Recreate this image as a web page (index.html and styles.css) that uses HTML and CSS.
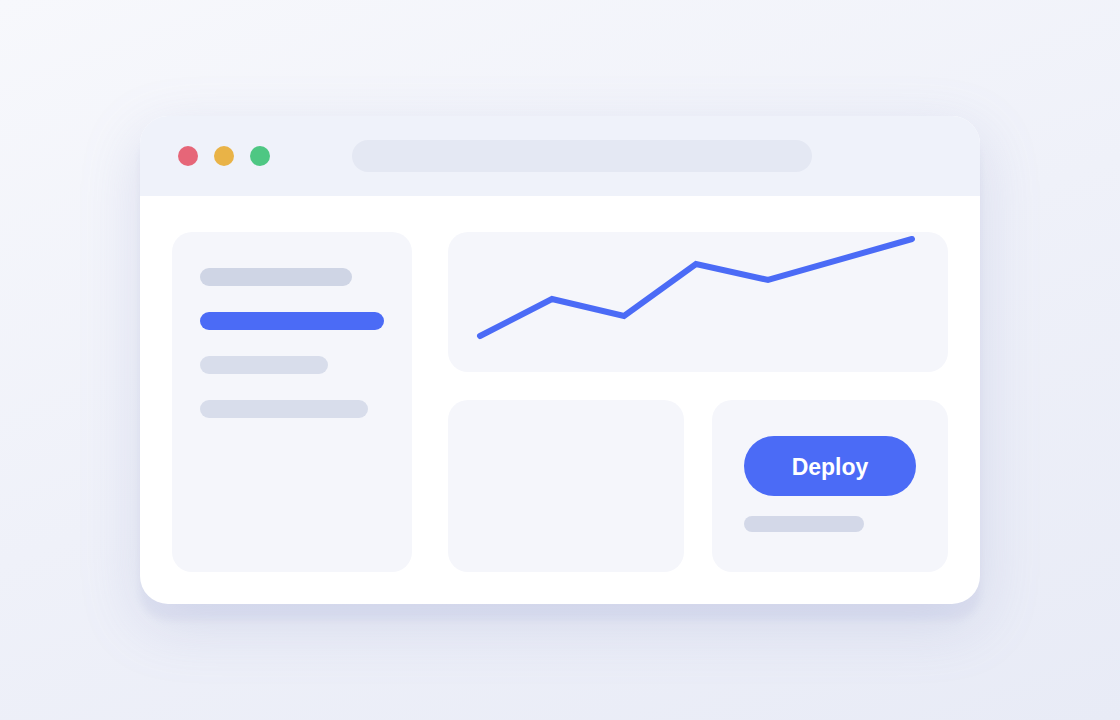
FILE: index.html
```html
<!DOCTYPE html>
<html>
<head>
<meta charset="utf-8">
<link rel="stylesheet" href="styles.css">
</head>
<body>
<div class="stage">
  <div class="window">
    <div class="titlebar">
      <div class="dots">
        <span class="dot red"></span>
        <span class="dot yellow"></span>
        <span class="dot green"></span>
      </div>
      <div class="url"></div>
    </div>
    <div class="content">
      <div class="card sidebar">
        <div class="line l1"></div>
        <div class="line l2"></div>
        <div class="line l3"></div>
        <div class="line l4"></div>
      </div>
      <div class="main">
        <div class="card chart">
          <svg width="500" height="140" viewBox="0 0 500 140">
            <polyline points="32,104 104,67 176,84 248,32 320,48 464,7" fill="none" stroke="#4b6bf6" stroke-width="6" stroke-linecap="round" stroke-linejoin="miter"/>
          </svg>
        </div>
        <div class="row">
          <div class="card box"></div>
          <div class="card box action">
            <button class="deploy">Deploy</button>
            <div class="line sub"></div>
          </div>
        </div>
      </div>
    </div>
  </div>
</div>
</body>
</html>
```

FILE: styles.css
```css
html, body {
  margin: 0;
  padding: 0;
}
body {
  width: 1120px;
  height: 720px;
  overflow: hidden;
  background: linear-gradient(160deg, #f7f8fc 0%, #eff1f9 50%, #e8ebf6 100%);
  font-family: "Liberation Sans", Arial, sans-serif;
}
.stage {
  width: 1120px;
  height: 720px;
  display: flex;
  align-items: center;
  justify-content: center;
}
.window {
  width: 840px;
  height: 488px;
  background: #ffffff;
  border-radius: 28px;
  overflow: hidden;
  box-shadow: 0 16px 6px rgba(175, 182, 218, 0.16), 0 20px 60px rgba(130, 140, 195, 0.22);
  display: flex;
  flex-direction: column;
}
.titlebar {
  height: 80px;
  background: #eff2fa;
  display: flex;
  align-items: center;
  padding-left: 38px;
  box-sizing: border-box;
}
.dots {
  display: flex;
  gap: 16px;
}
.dot {
  width: 20px;
  height: 20px;
  border-radius: 50%;
  display: block;
}
.red { background: #e66678; }
.yellow { background: #e9b347; }
.green { background: #4ec783; }
.url {
  margin-left: 82px;
  width: 460px;
  height: 32px;
  border-radius: 16px;
  background: #e4e8f3;
}
.content {
  flex: 1;
  display: flex;
  gap: 36px;
  padding: 36px 32px 32px;
}
.card {
  background: #f5f6fb;
  border-radius: 20px;
}
.sidebar {
  width: 240px;
  height: 340px;
  box-sizing: border-box;
  padding: 36px 28px;
  display: flex;
  flex-direction: column;
  gap: 26px;
}
.line {
  height: 18px;
  border-radius: 9px;
  background: #d8ddeb;
}
.l1 { width: 152px; background: #cfd5e5; }
.l2 { width: 184px; background: #4b6bf6; }
.l3 { width: 128px; }
.l4 { width: 168px; }
.main {
  width: 500px;
  display: flex;
  flex-direction: column;
  gap: 28px;
}
.chart {
  height: 140px;
}
.chart svg { display: block; }
.row {
  display: flex;
  gap: 28px;
}
.box {
  width: 236px;
  height: 172px;
}
.action {
  box-sizing: border-box;
  padding: 36px 32px;
  display: flex;
  flex-direction: column;
  gap: 20px;
}
.deploy {
  width: 172px;
  height: 60px;
  border: none;
  border-radius: 30px;
  background: #4b6bf6;
  color: #ffffff;
  font-family: "Liberation Sans", Arial, sans-serif;
  font-weight: bold;
  font-size: 23px;
  padding: 2px 0 0;
  cursor: pointer;
}
.sub {
  width: 120px;
  height: 16px;
  border-radius: 8px;
  background: #d3d8e8;
}
```
